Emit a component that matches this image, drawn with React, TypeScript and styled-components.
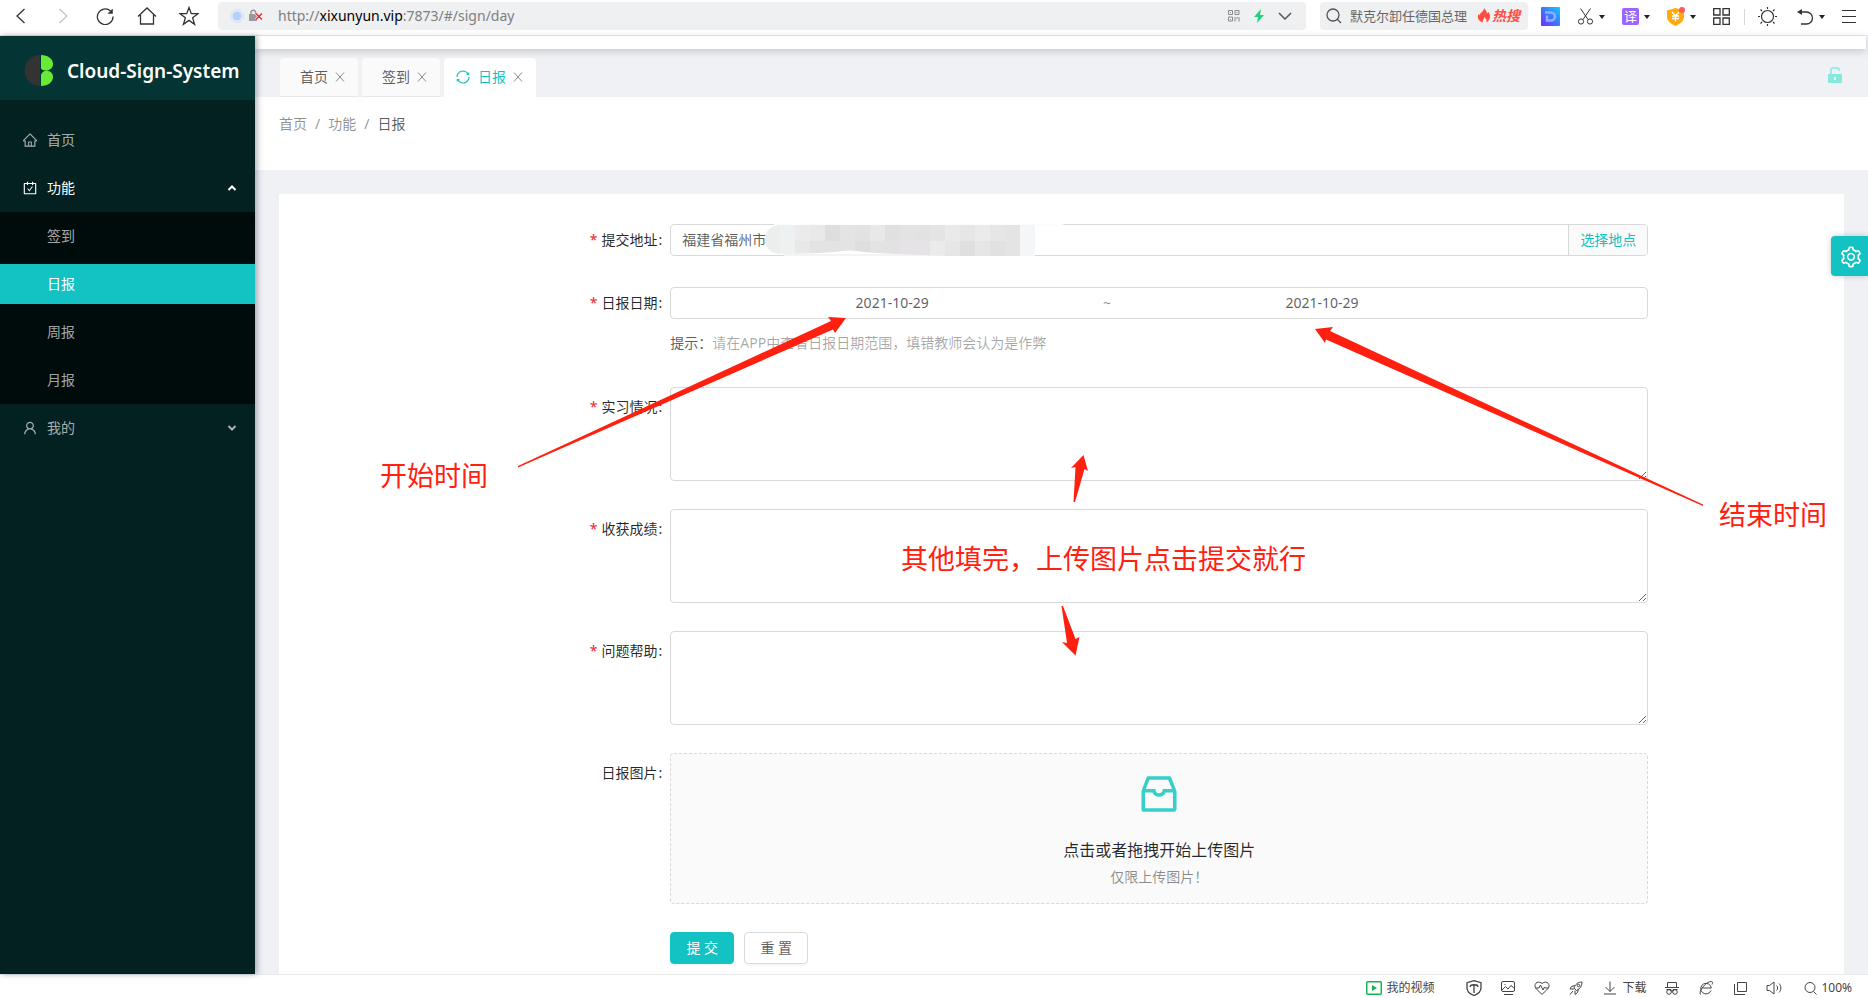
import React from "react";
import styled, { createGlobalStyle, css } from "styled-components";
import {
  AiOutlineHome,
  AiOutlineCarryOut,
  AiOutlineUser,
  AiOutlineInbox,
  AiOutlineSetting,
  AiOutlineSync,
} from "react-icons/ai";

const teal = "#13c2c2";
const line = "#d9d9d9";
const textColor = "rgba(0, 0, 0, 0.65)";

const GlobalStyle = createGlobalStyle`
  * { box-sizing: border-box; }
  body {
    margin: 0;
    background: #fff;
    color: ${textColor};
    font: 14px/20px "Noto Sans", "Noto Sans CJK SC", sans-serif;
  }
  button, input, textarea { font: inherit; color: inherit; }
`;

const Shell = styled.div`
  position: relative;
  display: flex;
  flex-direction: column;
  height: 100vh;
  overflow: hidden;
`;

/* ---------- browser bar ---------- */

const BrowserBar = styled.header`
  display: flex;
  align-items: center;
  flex: none;
  height: 36px;
  padding: 0 11px 4px 9px;
  border-bottom: 1px solid #e8e8e9;
  background: #fff;
`;

const IconButton = styled.button<{ $width?: number; $after?: number }>`
  display: flex;
  align-items: center;
  justify-content: center;
  gap: 5px;
  flex: none;
  width: ${(p) => (p.$width ? `${p.$width}px` : "auto")};
  height: 28px;
  margin: 0 ${(p) => p.$after ?? 0}px 0 0;
  padding: 0;
  border: 0;
  background: none;
  color: #333;
`;

const NavGroup = styled.nav`
  display: flex;
  gap: 18px;
  margin-right: 17px;
`;

const Field = styled.div<{ $fixed?: boolean }>`
  display: flex;
  align-items: center;
  height: 28px;
  border-radius: 4px;
  background: #eff0f2;
  ${(p) =>
    p.$fixed
      ? css`
          flex: none;
          width: 208px;
          margin-left: 14px;
          padding: 0 8px 0 6px;
        `
      : css`
          flex: 1;
          min-width: 0;
          gap: 14px;
          padding: 0 14px 0 12px;
        `}
`;

const SiteState = styled.span`
  display: flex;
  gap: 4px;
  align-items: center;
`;

const Url = styled.span`
  flex: 1;
  font-size: 14px;
  color: #7f7f7f;
  white-space: nowrap;
  strong { font-weight: 400; color: #000; }
`;

const SearchText = styled.span`
  flex: 1;
  margin-left: 8px;
  font-size: 13px;
  color: #666;
  white-space: nowrap;
`;

const Hot = styled.span`
  display: flex;
  align-items: center;
  gap: 1px;
  font-size: 14px;
  font-weight: 700;
  font-style: italic;
  color: #ff4d43;
`;

const Tools = styled.div`
  display: flex;
  align-items: center;
  gap: 17px;
  margin-left: 13px;
  padding-top: 2px;
`;

const Divider = styled.span`
  width: 1px;
  height: 16px;
  margin: 0 -4px 0 -3px;
  background: #d8d8d8;
`;

/* ---------- sidebar ---------- */

const Body = styled.div`
  display: flex;
  flex: 1;
  min-height: 0;
`;

const Sidebar = styled.aside`
  position: relative;
  z-index: 1;
  flex: none;
  width: 255px;
  background: #042121;
  box-shadow: 2px 0 6px rgba(0, 21, 41, 0.35);
`;

const Brand = styled.div`
  display: flex;
  align-items: center;
  height: 64px;
  padding: 6px 0 0 24px;
  background: #053434;
  h1 {
    margin: 0 0 0 12px;
    font-size: 19px;
    line-height: 32px;
    font-weight: 600;
    color: #fff;
    white-space: nowrap;
  }
`;

const Menu = styled.nav`
  display: flex;
  flex-direction: column;
  padding-top: 16px;
`;

const SubMenu = styled.div`
  display: flex;
  flex-direction: column;
  background: #000c0b;
`;

const MenuItem = styled.a<{ $nested?: boolean; $active?: boolean; $open?: boolean }>`
  display: flex;
  align-items: center;
  gap: 9px;
  height: 40px;
  margin: 4px 0;
  padding: 0 18px 0 ${(p) => (p.$nested ? 47 : 22)}px;
  color: ${(p) => (p.$active || p.$open ? "#fff" : "rgba(255, 255, 255, 0.65)")};
  background: ${(p) => (p.$active ? teal : "transparent")};
  text-decoration: none;
  > svg:last-child:not(:first-child) { margin-left: auto; }
`;

/* ---------- page ---------- */

const Page = styled.div`
  flex: 1;
  min-width: 0;
  display: flex;
  flex-direction: column;
  background: #f0f1f5;
`;

const TopStrip = styled.div`
  flex: none;
  height: 13px;
  margin-right: 2px;
  background: #fff;
  box-shadow: 0 2px 8px rgba(0, 0, 0, 0.18);
`;

const TabBar = styled.div`
  display: flex;
  align-items: flex-end;
  flex: none;
  gap: 4px;
  height: 48px;
  padding: 0 26px 0 25px;
  > svg { margin: 0 0 14px auto; }
`;

const Tab = styled.div<{ $active?: boolean }>`
  display: flex;
  align-items: center;
  height: 39px;
  padding: 0 13px 0 ${(p) => (p.$active ? 11 : 20)}px;
  border-radius: 4px 4px 0 0;
  border-bottom: 1px solid ${(p) => (p.$active ? "#fff" : "#e8e8e8")};
  background: ${(p) => (p.$active ? "#fff" : "#fafafa")};
  color: ${(p) => (p.$active ? teal : textColor)};
  > svg { margin-right: 7px; }
`;

const TabLink = styled.a`
  color: inherit;
  text-decoration: none;
`;

const TabClose = styled.button`
  display: flex;
  margin-left: 7px;
  padding: 0;
  border: 0;
  background: none;
  color: #8c8c8c;
`;

const PageHead = styled.div`
  flex: none;
  height: 73px;
  padding: 17px 24px;
  background: #fff;
`;

const Crumbs = styled.nav`
  display: flex;
  color: rgba(0, 0, 0, 0.45);
  a { color: inherit; text-decoration: none; }
  a + a::before { content: "/"; margin: 0 8px; }
  a:last-child { color: ${textColor}; }
  a:last-child::before { color: rgba(0, 0, 0, 0.45); }
`;

const Card = styled.main`
  flex: none;
  margin: 24px 24px 0;
  padding: 30px 0 60px;
  background: #fff;
`;

const Form = styled.form`
  display: flex;
  flex-direction: column;
  gap: 28px;
`;

const FormRow = styled.div`
  display: grid;
  grid-template-columns: 25% 62.5%;
`;

const Label = styled.label<{ $tall?: boolean; $required?: boolean }>`
  padding-right: 8px;
  line-height: ${(p) => (p.$tall ? 40 : 32)}px;
  text-align: right;
  color: rgba(0, 0, 0, 0.85);
  &::before {
    content: "${(p) => (p.$required ? "*" : "")}";
    margin-right: 4px;
    color: #f5222d;
  }
  &::after {
    content: ":";
    margin-left: 1px;
  }
`;

const Control = styled.div`
  min-height: 35px;
`;

const InputGroup = styled.div`
  position: relative;
  display: flex;
  height: 32px;
  border: 1px solid ${line};
  border-radius: 4px;
  input {
    flex: 1;
    min-width: 0;
    padding: 0 11px;
    border: 0;
    background: none;
    outline: 0;
  }
`;

const PickPlace = styled.button`
  flex: none;
  width: 79px;
  padding: 0;
  border: 0;
  border-left: 1px solid ${line};
  border-radius: 0 3px 3px 0;
  background: #fafafa;
  color: ${teal};
`;

const Mosaic = styled.svg`
  position: absolute;
  left: 93px;
  top: -1px;
`;

const DateRange = styled.div`
  display: flex;
  align-items: center;
  height: 32px;
  padding: 0 11px;
  border: 1px solid ${line};
  border-radius: 4px;
  input {
    flex: none;
    width: 44%;
    padding: 0;
    border: 0;
    background: none;
    outline: 0;
    text-align: center;
  }
  span { width: 10px; text-align: center; color: rgba(0, 0, 0, 0.45); }
`;

const Hint = styled.p`
  margin: 8px 0 0;
  line-height: 32px;
  span { color: rgba(0, 0, 0, 0.35); }
`;

const TextArea = styled.textarea`
  display: block;
  width: 100%;
  height: 94px;
  padding: 4px 11px;
  border: 1px solid ${line};
  border-radius: 4px;
  background: #fff;
  outline: 0;
  resize: vertical;
`;

const Upload = styled.button`
  display: flex;
  flex-direction: column;
  align-items: center;
  width: 100%;
  height: 151px;
  padding: 16px 0 0;
  border: 1px dashed ${line};
  border-radius: 4px;
  background: #fafafa;
  svg { color: #36cfc9; }
  strong {
    margin-top: 20px;
    font-size: 16px;
    line-height: 24px;
    font-weight: 400;
    color: rgba(0, 0, 0, 0.85);
  }
  small {
    margin-top: 4px;
    font-size: 14px;
    line-height: 22px;
    color: rgba(0, 0, 0, 0.45);
  }
`;

const Actions = styled.div`
  grid-column: 2;
  display: flex;
  gap: 10px;
`;

const ActionButton = styled.button<{ $primary?: boolean }>`
  width: 64px;
  height: 32px;
  padding: 0;
  border: 1px solid ${(p) => (p.$primary ? teal : line)};
  border-radius: 4px;
  background: ${(p) => (p.$primary ? teal : "#fff")};
  color: ${(p) => (p.$primary ? "#fff" : textColor)};
  box-shadow: 0 2px 0 rgba(0, 0, 0, 0.03);
`;

const SettingsHandle = styled.button`
  position: absolute;
  z-index: 2;
  right: 0;
  top: 236px;
  display: flex;
  align-items: center;
  width: 37px;
  height: 40px;
  padding: 2px 0 0 8px;
  border: 0;
  border-radius: 4px 0 0 4px;
  background: ${teal};
  box-shadow: 0 0 6px rgba(0, 0, 0, 0.2);
  color: #fff;
`;

/* ---------- status bar ---------- */

const StatusBar = styled.footer`
  display: flex;
  align-items: center;
  justify-content: flex-end;
  flex: none;
  gap: 18px;
  height: 24px;
  padding: 2px 16px 0 0;
  border-top: 1px solid #e9e9ea;
  background: #fff;
`;

const StatusButton = styled.button<{ $before?: number; $after?: number }>`
  display: flex;
  align-items: center;
  gap: 4px;
  min-width: 16px;
  margin: 0 ${(p) => p.$after ?? 0}px 0 ${(p) => p.$before ?? 0}px;
  padding: 0;
  border: 0;
  background: none;
  font-size: 12px;
  color: #444;
`;

/* ---------- annotations drawn over the page ---------- */

const Annotations = styled.div`
  position: absolute;
  inset: 0;
  z-index: 3;
  pointer-events: none;
  svg { position: absolute; left: 0; top: 0; }
`;

const Note = styled.span<{ $x: number; $y: number }>`
  position: absolute;
  left: ${(p) => p.$x}px;
  top: ${(p) => p.$y}px;
  font-size: 27px;
  line-height: 36px;
  color: #ff2010;
  white-space: nowrap;
`;

/* ---------- icons ---------- */

type GlyphProps = { w?: number; h?: number; sw?: number; color?: string; children: React.ReactNode };

const Glyph = ({ w = 16, h = 16, sw = 1, color = "currentColor", children }: GlyphProps) => (
  <svg width={w} height={h} viewBox={`0 0 ${w} ${h}`} fill="none" stroke={color} strokeWidth={sw} aria-hidden="true">
    {children}
  </svg>
);

const Caret = () => (
  <svg width="6" height="4" viewBox="0 0 6 4" aria-hidden="true">
    <path d="M0 0h6L3 4z" fill="#222" />
  </svg>
);

const Logo = () => (
  <svg width="31" height="34" viewBox="0 0 31 34" aria-hidden="true">
    <path d="M16 1v31A15.500 15.500 0 0 1 16 1z" fill="#333" />
    <path d="M17 1c7 0 12 4 12 9 0 4-3 6-6 6.500h-2q-3 0-4-2z" fill="#67eb34" />
    <path d="M17 32c7 0 12-4 12-9 0-4-3-6-6-6.500-3 0-5 2-6 4z" fill="#67eb34" />
  </svg>
);

const Unlock = () => (
  <svg width="14" height="16" viewBox="0 0 14 16" aria-hidden="true">
    <path d="M3 7V2.500Q3 1 4.500 1h5Q11 1 11 2.500V4" fill="none" stroke="#87e8de" strokeWidth="1.500" />
    <path d="M0 7h14v9H0zM6 10v3h2v-3z" fill="#87e8de" fillRule="evenodd" />
  </svg>
);

const mosaicTop = ["#eceeed", "#eef1f1", "#ebebeb", "#e9e9e9", "#dedede", "#e4e4e4", "#e2e2e2", "#e8e8e8", "#e0e0e0", "#e3e3e3", "#e2e2e2", "#e3e4e3", "#eaeaea", "#e6e6e6", "#ebebeb", "#e6e6e6", "#e4e4e4", "#f5f6f8"];
const mosaicBottom = ["#eceeed", "#eef1f0", "#e8e8e8", "#e3e3e3", "#e5e2e4", "#e3e3e3", "#dedede", "#e3e3e3", "#e3e2e2", "#e5e3e5", "#e6e2e6", "#e9eceb", "#e6e6e6", "#e0dfe0", "#e6e6e6", "#e1e1e1", "#e4e4e4", "#f5f6f8"];

const AddressMask = () => (
  <Mosaic width="306" height="32" viewBox="0 0 306 32" aria-hidden="true">
    <path d="M10 0h290l-3 2H10z" fill="#fcfcfc" />
    <path d="M20 30h160v2H20z" fill="#f4f4f4" />
    <clipPath id="mask-shape">
      <path d="M14 1H271V32H190Q120 30 100 28Q85 25 70 28Q40 30 14 30Q1 27 1 15Q1 4 14 1z" />
    </clipPath>
    <g clipPath="url(#mask-shape)">
      {mosaicTop.map((c, i) => (
        <rect key={`t${i}`} x={i * 15 + 1} y="0" width="15" height="17" fill={c} />
      ))}
      {mosaicBottom.map((c, i) => (
        <rect key={`b${i}`} x={i * 15 + 1} y="17" width="15" height="15" fill={c} />
      ))}
    </g>
  </Mosaic>
);

const Chevron = ({ up }: { up?: boolean }) => (
  <Glyph w={10} h={8} sw={2}>
    <path d={up ? "M1.500 6L5 2.500 8.500 6" : "M1.500 2L5 5.500 8.500 2"} />
  </Glyph>
);

const Cross = () => (
  <Glyph w={10} h={10}>
    <path d="M1 0.500l8 9M9 0.500l-8 9" />
  </Glyph>
);

const AreaRow = ({ id, label }: { id: string; label: string }) => (
  <FormRow>
    <Label htmlFor={id} $tall $required>{label}</Label>
    <TextArea id={id} />
  </FormRow>
);

const tabs = [
  { name: "首页", active: false },
  { name: "签到", active: false },
  { name: "日报", active: true },
];

const reports = ["签到", "日报", "周报", "月报"];

export default function App() {
  return (
    <Shell>
      <GlobalStyle />
      <BrowserBar>
        <NavGroup aria-label="浏览器">
          <IconButton $width={24} aria-label="后退">
            <Glyph h={18} w={18} sw={1.300}><path d="M12.500 2L5 9l7.500 7" /></Glyph>
          </IconButton>
          <IconButton $width={24} aria-label="前进">
            <Glyph h={18} w={18} sw={1.300} color="#c4c4c4"><path d="M5.500 2L13 9l-7.500 7" /></Glyph>
          </IconButton>
          <IconButton $width={24} aria-label="刷新">
            <Glyph h={18} w={18} sw={1.300}>
              <path d="M14.500 4A7.800 7.800 0 1 0 17 9.500" />
              <path d="M16.500 2v4.500H12z" fill="currentColor" strokeWidth="0.500" />
            </Glyph>
          </IconButton>
          <IconButton $width={24} aria-label="主页">
            <Glyph h={18} w={20} sw={1.300}><path d="M1 9.500L10 1l9 8.500M3.500 8v9h13V8" /></Glyph>
          </IconButton>
          <IconButton $width={24} aria-label="收藏">
            <Glyph h={20} w={20} sw={1.300}>
              <path d="M10 1.500l2.300 6.200h6.700l-5.400 4 2 6.600L10 14.400l-5.600 3.900 2-6.600L1 7.700h6.700z" />
            </Glyph>
          </IconButton>
        </NavGroup>
        <Field>
          <SiteState>
            <Glyph w={14} h={14}>
              <circle cx="7" cy="7" r="6.300" stroke="#cfdffc" />
              <circle cx="7" cy="7" r="4.500" fill="#b4d0fb" stroke="none" />
            </Glyph>
            <Glyph w={16} h={14}>
              <path d="M1 5h8v7H1z" fill="#999" stroke="none" />
              <path d="M3 5V3.500a2.300 2.300 0 0 1 4.600 0V5" stroke="#999" strokeWidth="1.500" />
              <path d="M8 4.500l6 6M14 4.500l-6 6" stroke="#eff0f2" strokeWidth="3" />
              <path d="M8 4.500l6 6M14 4.500l-6 6" stroke="#e03038" strokeWidth="1.500" />
            </Glyph>
          </SiteState>
          <Url>http://<strong>xixunyun.vip</strong>:7873/#/sign/day</Url>
          <Glyph w={12} h={12} color="#8a8a8a">
            <path d="M.5.5h4v4h-4zM7 .5h4v4H7zM.5 7h4v4h-4zM7 7v4.500M9 7v2M11 7v4.500M2.500 2v1M9 2v1M2.500 9v1" />
          </Glyph>
          <Glyph w={10} h={14}><path d="M7 0L0 8h4L3 14l7-8H6z" fill="#1fd07d" stroke="none" /></Glyph>
          <Glyph w={14} h={8} sw={1.500}><path d="M1 1l6 6 6-6" /></Glyph>
        </Field>
        <Field $fixed>
          <Glyph w={16} h={16} sw={1.300}><circle cx="7" cy="7" r="6" /><path d="M11.500 11.500l3.500 3.500" /></Glyph>
          <SearchText>默克尔卸任德国总理</SearchText>
          <Hot>
            <Glyph w={14} h={15}>
              <path d="M7 0c1 2 3 3 3 5.500L11.500 4C14 8 13.500 12 9.500 14.500 10 12 9 10.500 7.500 9 7 11 5.500 12 5.800 14.500 1 13 0 9 1.500 6l1 1.500C3 4 7 4 7 0z" fill="#ff4d43" stroke="none" />
            </Glyph>
            热搜
          </Hot>
        </Field>
        <Tools>
          <IconButton $width={19} aria-label="词典">
            <svg width="19" height="19" viewBox="0 0 19 19" aria-hidden="true">
              <defs>
                <linearGradient id="dict" x1="0" y1="1" x2="1" y2="0">
                  <stop offset="0" stopColor="#7a28ff" />
                  <stop offset="0.500" stopColor="#3a78ff" />
                  <stop offset="1" stopColor="#18c8ff" />
                </linearGradient>
              </defs>
              <rect width="19" height="19" rx="1" fill="url(#dict)" />
              <path d="M4 5.500h6a4 4 0 0 1 0 8H6V8.500" fill="none" stroke="#8fb0ff" strokeWidth="2.500" />
            </svg>
          </IconButton>
          <IconButton aria-label="截图">
            <Glyph w={17} h={17}>
              <path d="M3.500.5l7.500 11M13.500.5L6 11.500" /><circle cx="4" cy="13.500" r="2.600" /><circle cx="13" cy="13.500" r="2.600" />
            </Glyph>
            <Caret />
          </IconButton>
          <IconButton aria-label="翻译">
            <svg width="17" height="17" viewBox="0 0 17 17" aria-hidden="true">
              <rect width="17" height="17" rx="2" fill="#9a66ff" />
              <text x="2" y="13" fontSize="13" fill="#fff">译</text>
            </svg>
            <Caret />
          </IconButton>
          <IconButton aria-label="优惠">
            <Glyph w={18} h={19}>
              <path d="M8.500 1L17 3.500V10c0 4-4 7-8.500 9C4 17 0 14 0 10V3.500z" fill="#ffa90a" stroke="none" />
              <path d="M5 5l3.500 4L12 5M8.500 9v5.500M5 9h7M5 11.500h7" stroke="#fff" strokeWidth="1.300" />
              <circle cx="15" cy="3" r="3" fill="#ff5c55" stroke="none" />
            </Glyph>
            <Caret />
          </IconButton>
          <IconButton $width={17} aria-label="应用">
            <Glyph w={17} h={17} sw={1.300}>
              <path d="M.7.700h6.300v6.300H.7zM10 .7h6.300v6.300H10zM.7 10h6.300v6.300H.7zM10 10h6.300v6.300H10z" />
            </Glyph>
          </IconButton>
          <Divider />
          <IconButton $width={19} $after={3} aria-label="亮度">
            <Glyph w={19} h={19} sw={1.200}>
              <circle cx="9.500" cy="9.500" r="6" />
              <path d="M9.500 0v2M9.500 17v2M0 9.500h2M17 9.500h2M2.500 2.500L4 4M15 15l1.500 1.500M16.500 2.500L15 4M2.500 16.500L4 15" />
            </Glyph>
          </IconButton>
          <IconButton aria-label="撤销">
            <Glyph w={17} h={17} sw={1.300}>
              <path d="M3 4h6.500a6 6 0 0 1 0 12H4" /><path d="M5 1v6L0 4z" fill="currentColor" stroke="none" />
            </Glyph>
            <Caret />
          </IconButton>
          <IconButton $width={15} aria-label="菜单">
            <Glyph w={15} h={15} sw={1}><path d="M0 1.500h14M0 7.500h14M0 13.500h14" /></Glyph>
          </IconButton>
        </Tools>
      </BrowserBar>

      <Body>
        <Sidebar>
          <Brand>
            <Logo />
            <h1>Cloud-Sign-System</h1>
          </Brand>
          <Menu aria-label="主菜单">
            <MenuItem href="#/"><AiOutlineHome size={16} />首页</MenuItem>
            <MenuItem href="#/sign" $open><AiOutlineCarryOut size={16} />功能<Chevron up /></MenuItem>
            <SubMenu>
              {reports.map((name) => (
                <MenuItem key={name} href="#/sign/day" $nested $active={name === "日报"}>{name}</MenuItem>
              ))}
            </SubMenu>
            <MenuItem href="#/me"><AiOutlineUser size={16} />我的<Chevron /></MenuItem>
          </Menu>
        </Sidebar>

        <Page>
          <TopStrip />
          <TabBar>
            {tabs.map((tab) => (
              <Tab key={tab.name} $active={tab.active}>
                {tab.active && <AiOutlineSync size={16} />}
                <TabLink href="#/sign/day">{tab.name}</TabLink>
                <TabClose aria-label={`关闭${tab.name}`}><Cross /></TabClose>
              </Tab>
            ))}
            <Unlock />
          </TabBar>
          <PageHead>
            <Crumbs aria-label="面包屑">
              <a href="#/">首页</a>
              <a href="#/sign">功能</a>
              <a href="#/sign/day">日报</a>
            </Crumbs>
          </PageHead>
          <Card>
            <Form>
              <FormRow>
                <Label htmlFor="address" $required>提交地址</Label>
                <Control>
                  <InputGroup>
                    <input id="address" defaultValue="福建省福州市" />
                    <AddressMask />
                    <PickPlace type="button">选择地点</PickPlace>
                  </InputGroup>
                </Control>
              </FormRow>
              <FormRow>
                <Label htmlFor="start" $required>日报日期</Label>
                <Control>
                  <DateRange>
                    <input id="start" defaultValue="2021-10-29" />
                    <span>~</span>
                    <input aria-label="结束日期" defaultValue="2021-10-29" />
                  </DateRange>
                  <Hint>提示：<span>请在APP中查看日报日期范围，填错教师会认为是作弊</span></Hint>
                </Control>
              </FormRow>
              <AreaRow id="practice" label="实习情况" />
              <AreaRow id="result" label="收获成绩" />
              <AreaRow id="help" label="问题帮助" />
              <FormRow>
                <Label htmlFor="upload" $tall>日报图片</Label>
                <Upload id="upload" type="button">
                  <AiOutlineInbox size={48} />
                  <strong>点击或者拖拽开始上传图片</strong>
                  <small>仅限上传图片！</small>
                </Upload>
              </FormRow>
              <FormRow>
                <Actions>
                  <ActionButton type="button" $primary>提 交</ActionButton>
                  <ActionButton type="reset">重 置</ActionButton>
                </Actions>
              </FormRow>
            </Form>
          </Card>
        </Page>
      </Body>

      <StatusBar>
        <StatusButton $after={14}>
          <Glyph w={16} h={14} sw={1.500} color="#12b552">
            <rect x="0.750" y="0.750" width="14.500" height="12.500" rx="1" /><path d="M6 4l5 3-5 3z" fill="#12b552" stroke="none" />
          </Glyph>
          我的视频
        </StatusButton>
        <StatusButton aria-label="安全">
          <Glyph sw={1.300}>
            <path d="M8 .7l7 2v5c0 4-3 6.300-7 7.800C4 14 1 11.700 1 7.700v-5z" /><path d="M4 7c0-3 8-3 8 0M8 5v8M5.500 5h6" />
          </Glyph>
        </StatusButton>
        <StatusButton aria-label="图片">
          <Glyph><rect x="1.500" y="1.500" width="13" height="10" rx="1.500" /><path d="M2 10l3.500-3.500L8 9l3-3.500 3.500 3M4 14.500h9M4.500 4.500h1" /></Glyph>
        </StatusButton>
        <StatusButton aria-label="健康">
          <Glyph><path d="M8 14.500L2 8.500C-1 5 3-.5 8 3.500c5-4 9 1.500 6 5z" /><path d="M1.500 8H5l1.500-3L9 10l1.500-3 .7 1h3" /></Glyph>
        </StatusButton>
        <StatusButton aria-label="加速">
          <Glyph>
            <path d="M14 2c-4 0-6.500 2-8 6l2.500 2.500C12 9 14 6 14 2zM7 5.500L3.500 6.500 2 9h4M10.500 9l-1 3.500-2.500 2v-4M5 11l-3 3.500" /><circle cx="10.500" cy="5.500" r="1.200" />
          </Glyph>
        </StatusButton>
        <StatusButton>
          <Glyph><path d="M8 1.500v10M3.500 7L8 11.500 12.500 7M2 14h12" /></Glyph>
          下载
        </StatusButton>
        <StatusButton aria-label="无痕">
          <Glyph><path d="M3.500 7V2.500h9V7M1 7.500h14M2.500 9.500h4.500v1.500h2V9.500h4.500" /><circle cx="5" cy="12" r="2.300" /><circle cx="11" cy="12" r="2.300" /></Glyph>
        </StatusButton>
        <StatusButton aria-label="浏览模式">
          <Glyph><path d="M13 10.500A5.300 5.300 0 1 1 13.300 8H4.500" /><path d="M2.500 14.500C0 12 8 1 13.500 1.500c1.500.3 1 2 .5 3" /></Glyph>
        </StatusButton>
        <StatusButton aria-label="窗口">
          <Glyph><path d="M5.500 2.500h9v9h-9zM2.500 4v10.500H13" /></Glyph>
        </StatusButton>
        <StatusButton aria-label="声音">
          <Glyph><path d="M1 5.500h2.500L8 2v12L3.500 10.500H1zM10.500 5.500c1.500 1.500 1.500 3.500 0 5M13 3.500c2.500 2.500 2.500 6.500 0 9" /></Glyph>
        </StatusButton>
        <StatusButton $before={4}>
          <Glyph w={13}><circle cx="6" cy="7.500" r="5" /><path d="M9.500 11.500l3 3" /></Glyph>
          100%
        </StatusButton>
      </StatusBar>

      <SettingsHandle aria-label="设置"><AiOutlineSetting size={24} /></SettingsHandle>

      <Annotations>
        <svg width="1868" height="998" viewBox="0 0 1868 998" fill="#ff2010" aria-hidden="true">
          <path d="M846 318L828 317L831 321L518 466V467.500L833 329.500L835 333z" />
          <path d="M1315 329L1333 327L1330 331L1703 504.500V506L1326 339.500L1325 343z" />
          <path d="M1083.500 455L1088 471L1084.500 469L1075 502H1073.500L1075.500 467L1071 468z" />
          <path d="M1061.500 606H1063L1075.500 639L1079.500 637L1075.500 655.500L1062 642L1067 643z" />
        </svg>
        <Note $x={380} $y={458}>开始时间</Note>
        <Note $x={1719} $y={497}>结束时间</Note>
        <Note $x={901} $y={541}>其他填完，上传图片点击提交就行</Note>
      </Annotations>
    </Shell>
  );
}
